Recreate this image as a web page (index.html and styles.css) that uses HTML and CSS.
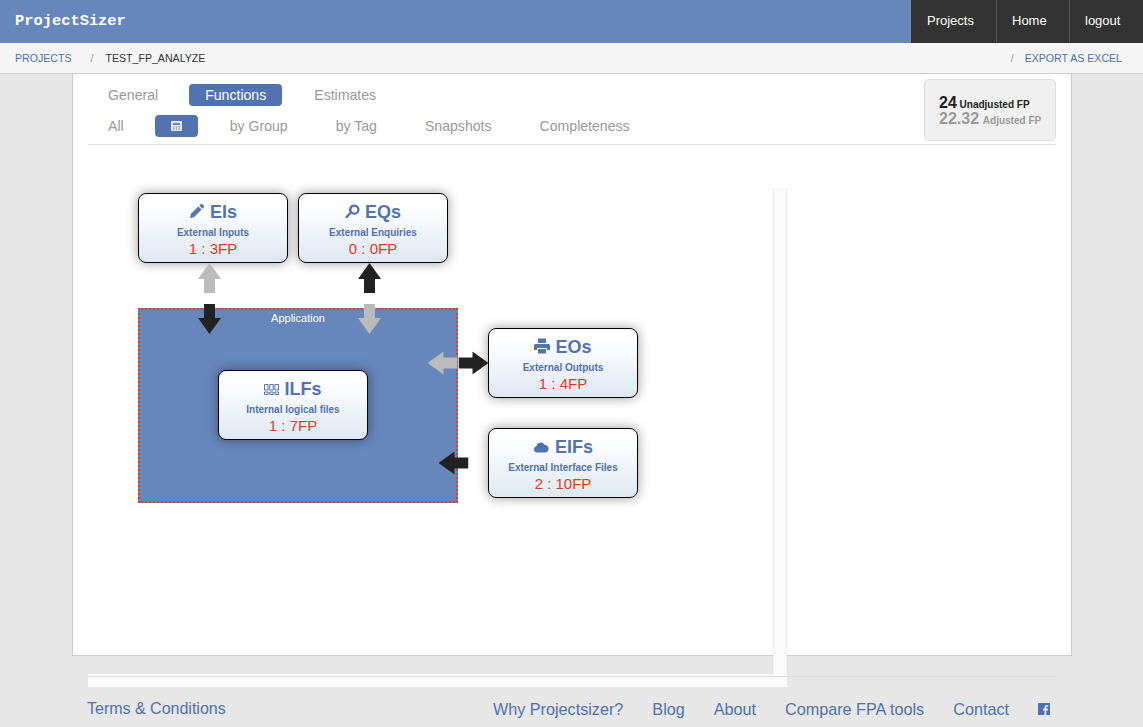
FILE: index.html
```html
<!DOCTYPE html>
<html lang="en">
<head>
  <meta charset="UTF-8" />
  <meta name="viewport" content="width=device-width, initial-scale=1.0"/>
  <title>ProjectSizer</title>
  <link rel="stylesheet" href="styles.css">
</head>
<body>

  <svg class="defs" width="0" height="0">
    <symbol id="arrow" viewBox="0 0 23 30">
      <polygon points="11.5,0 23,16 17,16 17,30 6,30 6,16 0,16" />
    </symbol>
  </svg>

  <header class="topbar">
    <a class="logo" href="#">ProjectSizer</a>
    <nav class="topnav">
      <a href="#" class="nav-projects">Projects</a>
      <a href="#" class="nav-home">Home</a>
      <a href="#" class="nav-logout">logout</a>
    </nav>
  </header>

  <div class="breadcrumb">
    <a href="#">PROJECTS</a>
    <span class="sep">/</span>
    <span class="current">TEST_FP_ANALYZE</span>
    <span class="sep sep-right">/</span>
    <a href="#">EXPORT AS EXCEL</a>
  </div>

  <main class="panel">
    <div class="panel-head">
      <div class="tabs">
        <div class="tab-row">
          <a href="#">General</a>
          <a href="#" class="active functions-tab">Functions</a>
          <a href="#">Estimates</a>
        </div>
        <div class="tab-row">
          <a href="#">All</a>
          <a href="#" class="active calc-tab">
            <svg class="calc-icon" viewBox="0 0 11 10" width="11" height="10">
              <path fill="#e4e9f3" d="M1 0h9a1 1 0 0 1 1 1v8a1 1 0 0 1-1 1H1a1 1 0 0 1-1-1V1a1 1 0 0 1 1-1z"/>
              <path fill="#6583bb" d="M2 2h7v2H2zM2 5.500h1.500v1H2zM4.700 5.500h1.500v1H4.700zM7.400 5.500H9v1H7.400zM2 7.500h1.500v1H2zM4.700 7.500h1.500v1H4.700zM7.400 7.500H9v1H7.400z"/>
            </svg>
          </a>
          <a href="#">by Group</a>
          <a href="#">by Tag</a>
          <a href="#">Snapshots</a>
          <a href="#">Completeness</a>
        </div>
      </div>
      <div class="fp-box">
        <div class="fp-line"><strong>24</strong> <span>Unadjusted FP</span></div>
        <div class="fp-line fp-adjusted"><strong>22.32</strong> <span>Adjusted FP</span></div>
      </div>
    </div>

    <div class="diagram">
      <div class="app-box">Application</div>

      <div class="card card-ei">
        <h3>
          <svg class="icon" viewBox="0 0 16 16" width="16" height="16"><path d="M11.600 1.200a1.200 1.200 0 0 1 1.700 0l1.500 1.500a1.200 1.200 0 0 1 0 1.700l-1.300 1.300-3.200-3.200zM9.400 3.400l3.200 3.200-7.400 7.400-4.200 1.200 1-4.400z"/></svg>
          EIs
        </h3>
        <p class="card-sub">External Inputs</p>
        <p class="card-count">1 : 3FP</p>
      </div>

      <div class="card card-eq">
        <h3>
          <svg class="icon" viewBox="0 0 16 16" width="15" height="15"><path fill-rule="evenodd" d="M10 0.500a5.500 5.500 0 1 1-3.300 9.900l-3.900 4.300a1.300 1.300 0 0 1-1.900-1.800l4-4.200A5.500 5.500 0 0 1 10 0.500zm0 2.500a3 3 0 1 0 0 6 3 3 0 0 0 0-6z"/></svg>
          EQs
        </h3>
        <p class="card-sub">External Enquiries</p>
        <p class="card-count">0 : 0FP</p>
      </div>

      <div class="card card-eo">
        <h3>
          <svg class="icon" viewBox="0 0 16 16" width="16" height="16"><path fill-rule="evenodd" d="M4 0.500h8V5H4zM1.500 6h13A1.500 1.500 0 0 1 16 7.500V12h-3v-2H3v2H0V7.500A1.500 1.500 0 0 1 1.500 6zM4 11h8v4.500H4z"/></svg>
          EOs
        </h3>
        <p class="card-sub">External Outputs</p>
        <p class="card-count">1 : 4FP</p>
      </div>

      <div class="card card-eif">
        <h3>
          <svg class="icon icon-cloud" viewBox="0 0 18 12" width="17" height="11"><path d="M4 11.500a3.500 3.500 0 0 1-.6-6.900A5 5 0 0 1 12.800 3.200 4.300 4.300 0 0 1 14 11.500z"/></svg>
          EIFs
        </h3>
        <p class="card-sub">External Interface Files</p>
        <p class="card-count">2 : 10FP</p>
      </div>

      <div class="card card-ilf">
        <h3>
          <svg class="icon icon-ilf" viewBox="0 0 15 11" width="15" height="11"><path fill="none" stroke="#5272b2" d="M.500.500h3.500v5.500H.500zM5.700.500h3.500v5.500H5.700zM10.900.500h3.600v5.500h-3.600zM.500 8h3.500v2.500H.500zM5.700 8h3.500v2.500H5.700zM10.900 8h3.600v2.500h-3.600z"/></svg>
          ILFs
        </h3>
        <p class="card-sub">Internal logical files</p>
        <p class="card-count">1 : 7FP</p>
      </div>

      <svg class="arrow light ei-up"><use href="#arrow"/></svg>
      <svg class="arrow dark ei-down"><use href="#arrow"/></svg>
      <svg class="arrow dark eq-up"><use href="#arrow"/></svg>
      <svg class="arrow light eq-down"><use href="#arrow"/></svg>
      <svg class="arrow light eo-left"><use href="#arrow"/></svg>
      <svg class="arrow dark eo-right"><use href="#arrow"/></svg>
      <svg class="arrow dark eif-left"><use href="#arrow"/></svg>

      <div class="track track-v"></div>
      <div class="track track-h"></div>
    </div>
  </main>

  <footer class="footer">
    <a href="#">Terms &amp; Conditions</a>
    <div class="footer-links">
      <a href="#">Why Projectsizer?</a>
      <a href="#">Blog</a>
      <a href="#">About</a>
      <a href="#">Compare FPA tools</a>
      <a href="#">Contact</a>
      <a href="#" class="fb">
        <svg viewBox="0 0 12 12" width="12" height="12"><path fill="#4f71b3" d="M0 0h12v12H8.300V7.400h1.500l.3-1.800H8.300V4.500c0-.5.200-.9.900-.9h1V2c-.3 0-.8-.1-1.300-.1-1.400 0-2.400.9-2.400 2.400v1.300H5v1.800h1.500V12H0z"/></svg>
      </a>
    </div>
  </footer>

</body>
</html>
```

FILE: styles.css
```css
body {
  font-family: "Liberation Sans", Arial, sans-serif;
  margin: 0;
  height: 727px;
  overflow: hidden;
  background-color: #e7e7e7;
}

a {
  text-decoration: none;
}

.defs {
  position: absolute;
}

.topbar {
  display: flex;
  justify-content: space-between;
  height: 43px;
  background-color: #6786bc;
}

.logo {
  padding-left: 15px;
  font-family: "Liberation Mono", monospace;
  font-size: 15.4px;
  font-weight: bold;
  line-height: 42px;
  color: #fff;
}

.topnav {
  display: flex;
  background-color: #333;
}

.topnav a {
  display: block;
  padding-left: 15px;
  border-left: 1px solid #555;
  font-size: 13px;
  line-height: 41px;
  color: #fff;
}

.nav-projects {
  width: 69px;
  border-left-color: #333 !important;
}

.nav-home {
  width: 57px;
}

.nav-logout {
  width: 58px;
}

.breadcrumb {
  display: flex;
  align-items: center;
  height: 30px;
  padding: 0 21px 0 15px;
  border-bottom: 1px solid #ccc;
  background-color: #f5f5f5;
  font-size: 10.6px;
}

.breadcrumb a {
  color: #4f71b3;
}

.breadcrumb .sep {
  margin: 0 12px 0 19px;
  color: #999;
}

.breadcrumb .sep-right {
  margin: 0 11px 0 auto;
}

.breadcrumb .current {
  color: #333;
}

.panel {
  box-sizing: border-box;
  width: 1000px;
  height: 582px;
  margin-left: 72px;
  padding: 0 15px;
  border: 1px solid #ccc;
  border-top: 0;
  background-color: #fff;
}

.panel-head {
  display: flex;
  justify-content: space-between;
  height: 70px;
  border-bottom: 1px solid #ddd;
}

.tabs {
  padding: 10px 0 0 4px;
}

.tab-row {
  display: flex;
  gap: 16px;
  margin-bottom: 9px;
}

.tab-row a {
  height: 22px;
  padding: 0 16px;
  border-radius: 4px;
  font-size: 14.1px;
  line-height: 22px;
  color: #999;
}

.tab-row a.active {
  background-color: #5272b2;
  color: #fff;
}

.tab-row .functions-tab {
  margin-left: -1px;
}

.tab-row .calc-tab {
  display: flex;
  align-items: center;
  box-sizing: border-box;
  width: 43px;
  padding: 0 0 0 16px;
  margin-left: -1px;
}

.fp-box {
  box-sizing: border-box;
  width: 132px;
  height: 62px;
  margin-top: 5px;
  padding: 15px 14px 0;
  border: 1px solid #ddd;
  border-radius: 5px;
  background-color: #f0f0f0;
  color: #222;
}

.fp-line {
  height: 16px;
  font-size: 10px;
  font-weight: bold;
  line-height: 16px;
  white-space: nowrap;
}

.fp-line strong {
  font-size: 16px;
}

.fp-adjusted {
  color: #999;
}

.fp-adjusted span {
  margin-left: 1px;
}

.diagram {
  position: relative;
  width: 699px;
  height: 499px;
  margin-top: 43px;
}

.app-box {
  position: absolute;
  left: 50px;
  top: 120px;
  box-sizing: border-box;
  width: 320px;
  height: 195px;
  padding-top: 2px;
  border: 2px dotted #e03c1c;
  background-color: #6786bc;
  font-size: 11px;
  line-height: 13px;
  text-align: center;
  color: #fff;
}

.card {
  position: absolute;
  box-sizing: border-box;
  width: 150px;
  height: 70px;
  padding-top: 8px;
  border: 1px solid #000;
  border-radius: 8px;
  background: linear-gradient(to bottom, #fff 15%, #dfe8f3 100%);
  box-shadow: 0 0 12px rgba(0, 0, 0, 0.4);
  text-align: center;
}

.card h3 {
  margin: 0;
  font-size: 18px;
  line-height: 20px;
  color: #5272b2;
}

.card p {
  margin: 0;
}

.card-sub {
  margin-top: 4px !important;
  font-size: 10px;
  font-weight: bold;
  line-height: 14px;
  color: #5272b2;
}

.card-count {
  font-size: 15px;
  line-height: 18px;
  color: #e03c1c;
}

.icon {
  fill: #5272b2;
  vertical-align: -1px;
}

.icon-cloud {
  vertical-align: 0;
}

.icon-ilf {
  vertical-align: 0;
}

.card-ei { left: 50px; top: 5px; }
.card-eq { left: 210px; top: 5px; }
.card-eo { left: 400px; top: 140px; }
.card-eif { left: 400px; top: 240px; }
.card-ilf { left: 130px; top: 182px; }

.arrow {
  position: absolute;
  width: 23px;
  height: 30px;
}

.arrow.light { fill: #bbb; }
.arrow.dark { fill: #222; }

.ei-up { left: 110px; top: 75px; }
.ei-down { left: 110px; top: 116px; transform: rotate(180deg); }
.eq-up { left: 270px; top: 75px; }
.eq-down { left: 270px; top: 116px; transform: rotate(180deg); }
.eo-left { left: 343px; top: 160px; transform: rotate(-90deg); }
.eo-right { left: 374px; top: 160px; transform: rotate(90deg); }
.eif-left { left: 354px; top: 260px; transform: rotate(-90deg); }

.track {
  position: absolute;
  box-sizing: border-box;
  background-color: #fafafa;
}

.track-v {
  right: 0;
  top: 0;
  bottom: 0;
  width: 14px;
  border-left: 1px solid #eee;
  border-right: 1px solid #eee;
}

.track-h {
  left: 0;
  bottom: 0;
  width: 699px;
  height: 13px;
}

.footer {
  position: relative;
  display: flex;
  justify-content: space-between;
  box-sizing: border-box;
  width: 969px;
  margin: 20px 0 0 87px;
  padding: 22px 6px 0 0;
  border-top: 1px solid #ddd;
  font-size: 16px;
  line-height: 20px;
}

.footer a {
  color: #4f71b3;
}

.footer-links {
  display: flex;
  gap: 29px;
  font-size: 16.2px;
}

.fb {
  display: flex;
  align-items: center;
}
```
